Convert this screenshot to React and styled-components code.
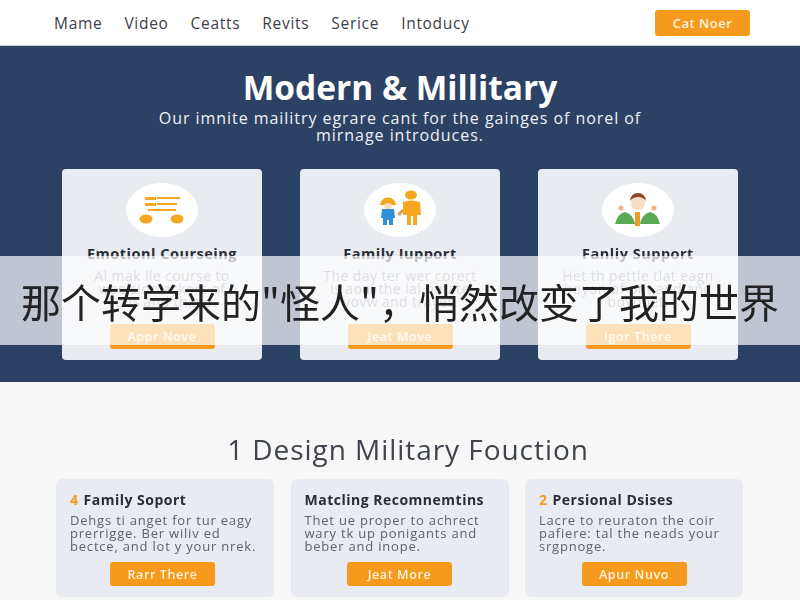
import styled, { createGlobalStyle } from "styled-components";

const GlobalStyle = createGlobalStyle`
  html, body {
    margin: 0;
    padding: 0;
    background: #f7f7f7;
  }
  * {
    box-sizing: border-box;
  }
`;

const Page = styled.div`
  position: relative;
  width: 800px;
  height: 600px;
  overflow: hidden;
  font-family: "Open Sans", "Liberation Sans", sans-serif;
`;
const Content = styled.div`
  filter: blur(0.5px);
`;

const Header = styled.header`
  height: 46px;
  padding: 0 50px 0 54px;
  display: flex;
  align-items: center;
  justify-content: space-between;
  background: #fff;
  border-bottom: 1px solid #c9d0da;
`;
const Nav = styled.nav`
  display: flex;
  gap: 22px;
`;
const NavLink = styled.span`
  font-size: 15.5px;
  letter-spacing: 0.7px;
  color: #3c4048;
`;
const CtaButton = styled.div`
  width: 95px;
  height: 26px;
  border-radius: 3px;
  background: #f59a1c;
  color: #fff4dc;
  font-size: 13px;
  letter-spacing: 0.5px;
  font-weight: 600;
  display: flex;
  align-items: center;
  justify-content: center;
`;

const Hero = styled.section`
  height: 336px;
  padding-top: 21px;
  background: #2c4265;
  text-align: center;
  color: #fff;
`;
const HeroTitle = styled.h1`
  margin: 0;
  font-size: 33.5px;
  line-height: 40px;
  font-weight: 700;
`;
const HeroText = styled.p`
  margin: 3px auto 0;
  width: 500px;
  font-size: 16px;
  letter-spacing: 0.95px;
  line-height: 17px;
  color: #eef1f5;
`;
const HeroCards = styled.div`
  margin: 25px 62px 0;
  display: grid;
  grid-template-columns: repeat(3, 200px);
  justify-content: space-between;
`;
const HeroCard = styled.div`
  height: 191px;
  padding-top: 14px;
  border-radius: 4px;
  background: #e8ebf0;
  display: flex;
  flex-direction: column;
  align-items: center;
`;
const IconCircle = styled.div`
  width: 72px;
  height: 54px;
  border-radius: 50%;
  background: #fff;
  display: flex;
  align-items: center;
  justify-content: center;
`;
const HeroCardTitle = styled.h3`
  margin: 8px 0 0;
  font-size: 14.5px;
  letter-spacing: 0.5px;
  line-height: 18px;
  font-weight: 700;
  color: #2a2d33;
`;
const HeroCardText = styled.p`
  margin: 6px 0 0;
  height: 42px;
  font-size: 14px;
  letter-spacing: 0.4px;
  line-height: 13px;
  color: #8b8f98;
  text-align: center;
`;
const HeroButton = styled.div`
  margin-top: 13px;
  width: 105px;
  height: 25px;
  border-radius: 3px;
  background: #f59a1c;
  color: #fff4dc;
  font-size: 12.5px;
  letter-spacing: 0.6px;
  font-weight: 600;
  display: flex;
  align-items: center;
  justify-content: center;
`;

const Lower = styled.section`
  height: 218px;
  margin-top: 2px;
  background: #f7f7f7;
  text-align: center;
`;
const LowerTitle = styled.h2`
  margin: 0;
  padding: 48px 0 0 16px;
  font-size: 28px;
  letter-spacing: 0.95px;
  line-height: 34px;
  font-weight: 400;
  color: #3f444c;
`;
const LowerCards = styled.div`
  margin: 13px 57px 0 56px;
  display: grid;
  grid-template-columns: repeat(3, 218px);
  justify-content: space-between;
`;
const LowerCard = styled.div`
  height: 118px;
  padding: 12px 14px 0;
  border-radius: 6px;
  background: #e8ecf2;
  display: flex;
  flex-direction: column;
  align-items: center;
`;
const LowerCardTitle = styled.h3`
  margin: 0;
  width: 100%;
  text-align: left;
  font-size: 14px;
  letter-spacing: 0.5px;
  line-height: 18px;
  font-weight: 700;
  color: #2a2d33;
  white-space: nowrap;
`;
const Num = styled.span`
  color: #f59a1c;
  margin-right: 5px;
`;
const LowerCardText = styled.p`
  margin: 5px 0 0;
  width: 100%;
  height: 39px;
  text-align: left;
  font-size: 13px;
  letter-spacing: 0.8px;
  line-height: 13px;
  color: #5d626b;
  white-space: nowrap;
`;
const LowerButton = styled(HeroButton)`
  margin-top: 9px;
  margin-right: ${({ $shift }) => $shift || 0}px;
  height: 24px;
`;

const Banner = styled.div`
  position: absolute;
  left: 0;
  right: 0;
  top: 256px;
  height: 89px;
  background: rgba(255, 255, 255, 0.7);
  color: #222;
  font-family: "Noto Sans CJK SC", "Noto Sans", sans-serif;
  font-size: 40px;
  display: flex;
  align-items: center;
  justify-content: center;
  white-space: nowrap;
`;

const CounselIcon = () => (
  <svg width="46" height="36" viewBox="0 0 46 36">
    <g fill="#f5a623">
      <rect x="6" y="5" width="11" height="3" />
      <rect x="18" y="5" width="23" height="2" />
      <rect x="6" y="11" width="11" height="3" />
      <rect x="18" y="11" width="20" height="2" />
      <rect x="9" y="17" width="28" height="2" />
      <ellipse cx="7" cy="27" rx="6.500" ry="4.500" />
      <ellipse cx="38" cy="27" rx="6.500" ry="4.500" />
    </g>
  </svg>
);

const FamilyIcon = () => (
  <svg width="46" height="42" viewBox="0 0 46 42">
    <path d="M20 25l5-5 2 2-4 5z" fill="#d9a15c" />
    <g fill="#f5a81f">
      <ellipse cx="34" cy="6" rx="6" ry="4.500" />
      <path d="M26 13q8-3 17 0l1 13h-4v10h-4V27h-2v9h-4V26h-4z" />
      <path d="M3 16a8 7.500 0 0 1 16 0z" />
    </g>
    <ellipse cx="11" cy="17" rx="4" ry="3" fill="#f8d9b8" />
    <path d="M5 20h12l1 9h-2v7h-4v-5h-2v5H6v-7H4z" fill="#2f8fd8" />
  </svg>
);

const PersonIcon = () => (
  <svg width="46" height="42" viewBox="0 0 46 42">
    <path d="M0 35q3-11 10-12 8 2 10 12zM25 35q2-10 10-12 7 1 10 12z" fill="#5aaa55" />
    <path d="M20 23h5v14h-5z" fill="#ee9b22" />
    <ellipse cx="23" cy="14" rx="7" ry="7.500" fill="#f9dcc4" />
    <path d="M15 12q1-8 8-8t8 8q-3-4-8-4t-8 4z" fill="#8a4a2a" />
    <circle cx="6" cy="19" r="2.500" fill="#f2b088" />
    <circle cx="39" cy="19" r="2.500" fill="#f2b088" />
  </svg>
);

const heroCards = [
  {
    icon: <CounselIcon />,
    title: "Emotionl Courseing",
    text: ["Al mak lle course to", "waelsion ackers of", "yous and thayd."],
    button: "Appr Nove",
  },
  {
    icon: <FamilyIcon />,
    title: "Family Iupport",
    text: ["The day ter wer corert", "is aoal the ial netate", "yovw and trayet."],
    button: "Jeat Move",
  },
  {
    icon: <PersonIcon />,
    title: "Fanliy Support",
    text: ["Het th pettle tlat eagn", "boyon of pnt and and", "boyonet."],
    button: "Igor There",
  },
];

const lowerCards = [
  {
    num: "4",
    title: "Family Soport",
    text: ["Dehgs ti anget for tur eagy", "prerrigge. Ber wiliv ed", "bectce, and lot y your nrek."],
    button: "Rarr There",
    shift: 5,
  },
  {
    title: "Matcling Recomnemtins",
    text: ["Thet ue proper to achrect", "wary tk up ponigants and", "beber and inope."],
    button: "Jeat More",
  },
  {
    num: "2",
    title: "Persional Dsises",
    text: ["Lacre to reuraton the coir", "pafiere: tal the neads your", "srgpnoge."],
    button: "Apur Nuvo",
  },
];

const Lines = ({ lines }) =>
  lines.map((line) => <div key={line}>{line}</div>);

export default function App() {
  return (
    <Page>
      <GlobalStyle />
      <Content>
        <Header>
          <Nav>
            {["Mame", "Video", "Ceatts", "Revits", "Serice", "Intoducy"].map((item) => (
              <NavLink key={item}>{item}</NavLink>
            ))}
          </Nav>
          <CtaButton>Cat Noer</CtaButton>
        </Header>
        <Hero>
          <HeroTitle>Modern &amp; Millitary</HeroTitle>
          <HeroText>
            Our imnite mailitry egrare cant for the gainges of norel of mirnage introduces.
          </HeroText>
          <HeroCards>
            {heroCards.map((card) => (
              <HeroCard key={card.title}>
                <IconCircle>{card.icon}</IconCircle>
                <HeroCardTitle>{card.title}</HeroCardTitle>
                <HeroCardText>
                  <Lines lines={card.text} />
                </HeroCardText>
                <HeroButton>{card.button}</HeroButton>
              </HeroCard>
            ))}
          </HeroCards>
        </Hero>
        <Lower>
          <LowerTitle>1 Design Military Fouction</LowerTitle>
          <LowerCards>
            {lowerCards.map((card) => (
              <LowerCard key={card.title}>
                <LowerCardTitle>
                  {card.num && <Num>{card.num}</Num>}
                  {card.title}
                </LowerCardTitle>
                <LowerCardText>
                  <Lines lines={card.text} />
                </LowerCardText>
                <LowerButton $shift={card.shift}>{card.button}</LowerButton>
              </LowerCard>
            ))}
          </LowerCards>
        </Lower>
      </Content>
      <Banner>那个转学来的"怪人"，悄然改变了我的世界</Banner>
    </Page>
  );
}
